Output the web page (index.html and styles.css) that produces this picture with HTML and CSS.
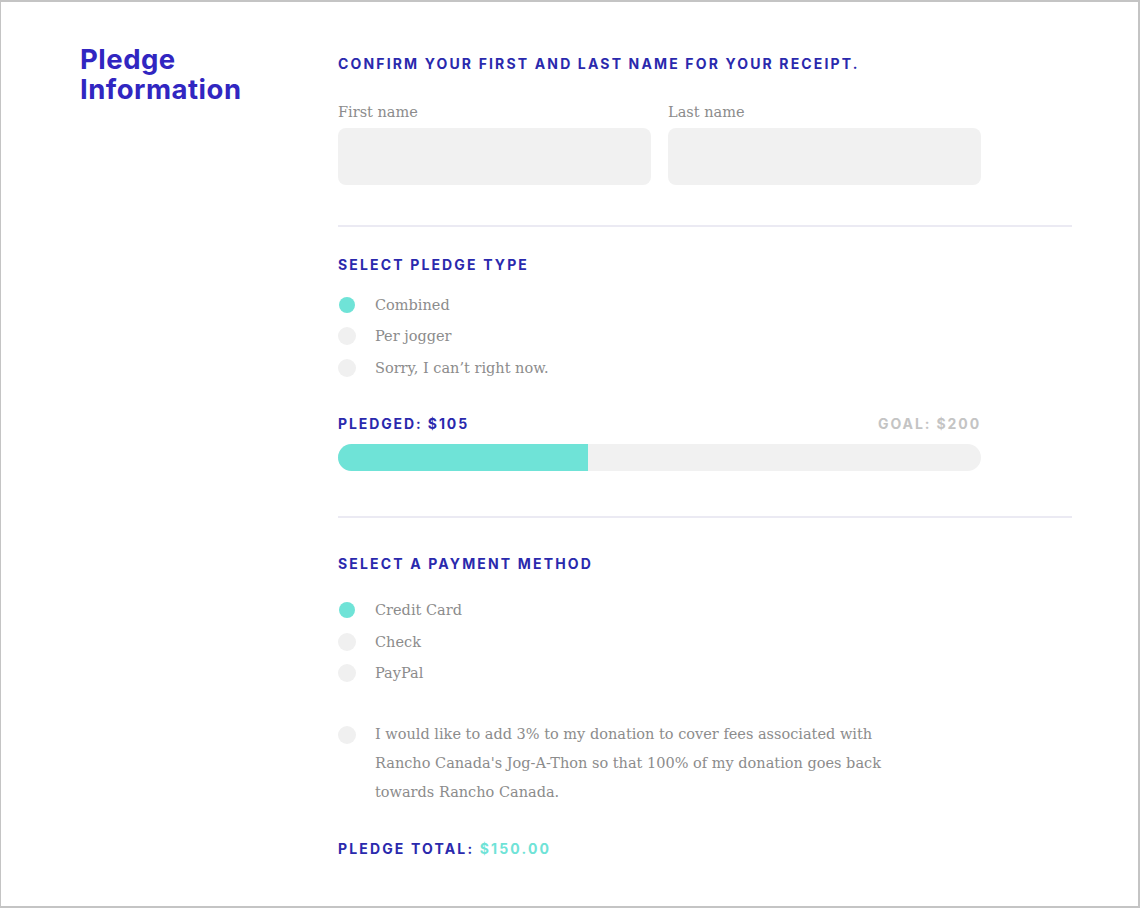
FILE: index.html
```html
<!DOCTYPE html>
<html>
<head>
<meta charset="utf-8">
<link rel="stylesheet" href="styles.css">
</head>
<body>
<div class="frame">
  <div class="layout">
    <div class="side">
      <h1 class="title">Pledge<br>Information</h1>
    </div>
    <div class="main">
      <section class="section">
        <h2 class="heading">Confirm your first and last name for your receipt.</h2>
        <div class="names">
          <div class="field">
            <div class="label">First name</div>
            <div class="input"></div>
          </div>
          <div class="field">
            <div class="label">Last name</div>
            <div class="input"></div>
          </div>
        </div>
      </section>
      <hr class="divider">
      <section class="section pledge">
        <h2 class="heading">Select pledge type</h2>
        <ul class="options">
          <li class="option"><span class="dot on"></span><span>Combined</span></li>
          <li class="option"><span class="dot"></span><span>Per jogger</span></li>
          <li class="option"><span class="dot"></span><span>Sorry, I can’t right now.</span></li>
        </ul>
        <div class="progress-head">
          <span class="pledged">Pledged: $105</span>
          <span class="goal">Goal: $200</span>
        </div>
        <div class="bar"><div class="fill" style="width:38.9%"></div></div>
      </section>
      <hr class="divider second">
      <section class="section payment">
        <h2 class="heading">Select a payment method</h2>
        <ul class="options">
          <li class="option"><span class="dot on"></span><span>Credit Card</span></li>
          <li class="option"><span class="dot"></span><span>Check</span></li>
          <li class="option"><span class="dot"></span><span>PayPal</span></li>
        </ul>
        <div class="fee">
          <span class="dot"></span>
          <p class="fee-text">I would like to add 3% to my donation to cover fees associated with Rancho Canada's Jog-A-Thon so that 100% of my donation goes back towards Rancho Canada.</p>
        </div>
        <div class="total">Pledge total: <span class="amount">$150.00</span></div>
      </section>
    </div>
  </div>
</div>
</body>
</html>
```

FILE: styles.css
```css
* { box-sizing: border-box; }
html, body { margin: 0; padding: 0; background: #fff; }
.frame {
  width: 1140px;
  height: 908px;
  border: 2px solid #c4c4c4;
  border-left-width: 1px;
  background: #fff;
  overflow: hidden;
}
.layout {
  display: grid;
  grid-template-columns: 258px 734px;
  padding-left: 79px;
  padding-top: 43px;
}
.title {
  margin: -1px 0 0;
  font-family: Inter, "Noto Sans", sans-serif;
  font-weight: 700;
  font-size: 27.5px;
  line-height: 30px;
  color: #3126c1;
  letter-spacing: 0.5px;
}
.main { padding-top: 10px; }
.heading, .progress-head, .total {
  margin: 0;
  font-family: Inter, "Noto Sans", sans-serif;
  font-weight: 700;
  font-size: 14px;
  line-height: 18px;
  letter-spacing: 2.15px;
  text-transform: uppercase;
  color: #2a29ad;
}
.names {
  display: flex;
  gap: 17px;
  margin-top: 29px;
}
.field { width: 313px; }
.label {
  font-family: "DejaVu Serif", "Liberation Serif", serif;
  font-size: 14.5px;
  line-height: 20px;
  color: #8c8c8c;
}
.input {
  margin-top: 6px;
  height: 57px;
  background: #f1f1f1;
  border-radius: 8px;
}
.divider {
  border: 0;
  height: 2px;
  background: #ebeaf3;
  margin: 40px 0 0;
}
.divider.second { margin-top: 45px; }
.pledge { padding-top: 29px; }
.payment { padding-top: 37px; }
.options {
  list-style: none;
  margin: 15px 0 0;
  padding: 0;
}
.payment .options { margin-top: 22px; }
.option {
  display: flex;
  align-items: center;
  height: 31.5px;
  font-family: "DejaVu Serif", "Liberation Serif", serif;
  font-size: 14.5px;
  color: #8c8c8c;
}
.dot {
  flex: none;
  width: 18px;
  height: 18px;
  border-radius: 50%;
  background: #f0f0f0;
  margin-right: 19px;
}
.dot.on { background: #6fe3d7; width: 16px; height: 16px; margin-left: 1px; margin-right: 20px; }
.progress-head {
  display: flex;
  justify-content: space-between;
  margin-top: 31px;
  width: 643px;
  letter-spacing: 1.9px;
}
.pledged { color: #2a29ad; }
.goal { color: #c4c4c4; }
.bar {
  margin-top: 11px;
  width: 643px;
  height: 27px;
  border-radius: 14px;
  background: #f1f1f1;
  overflow: hidden;
}
.fill { height: 100%; background: #6fe3d7; }
.fee {
  display: flex;
  align-items: flex-start;
  margin-top: 31px;
}
.fee .dot { margin-top: 6px; }
.fee-text {
  margin: 0;
  width: 530px;
  font-family: "DejaVu Serif", "Liberation Serif", serif;
  font-size: 14.5px;
  line-height: 29px;
  color: #8c8c8c;
}
.total { margin-top: 33px; }
.amount { color: #6fe3d7; }
```
